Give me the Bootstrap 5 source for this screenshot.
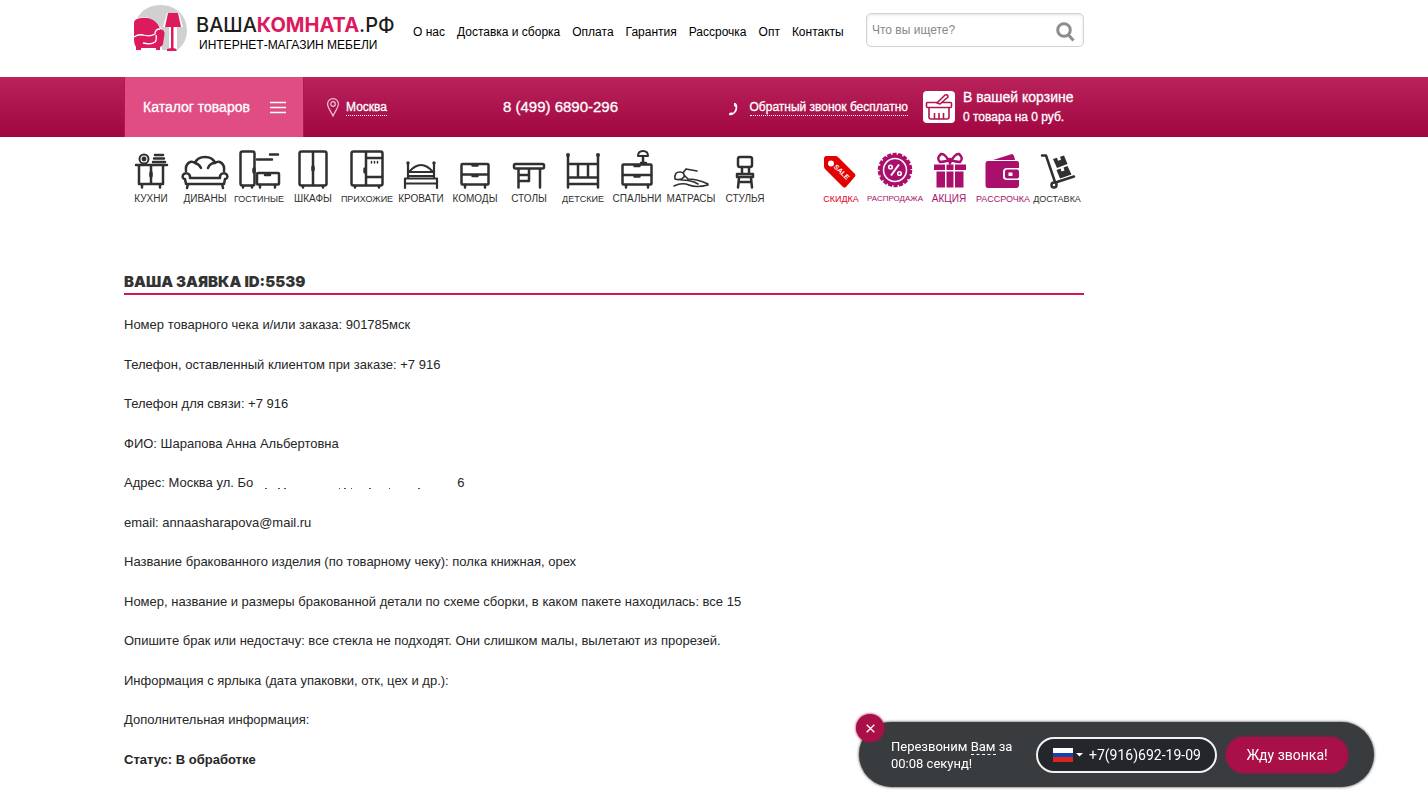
<!DOCTYPE html>
<html lang="ru">
<head>
<meta charset="utf-8">
<meta name="viewport" content="width=device-width, initial-scale=1">
<title>Ваша комната — заявка 5539</title>
<link href="https://cdn.jsdelivr.net/npm/bootstrap@5.3.0/dist/css/bootstrap.min.css" rel="stylesheet">
<script src="https://cdn.jsdelivr.net/npm/bootstrap@5.3.0/dist/js/bootstrap.bundle.min.js" defer></script>
<style>
body{font-family:"Liberation Sans",Arial,sans-serif;font-size:13px;color:#262626;background:#fff}
a{color:inherit;text-decoration:none}
.page-col{max-width:960px;margin-left:124px}
.site-head{height:77px}
.brand{width:280px;padding:5px 0 0 10px}
.brand-name{font:500 20px/24px Inter,sans-serif;color:#1d1d1b}
.brand-name b{font-weight:700;color:#dc1a5e}
.brand-sub{font-size:12px;line-height:16px;color:#000;padding-left:3px}
.top-nav{font-size:12px;line-height:18px;color:#000;gap:12px;padding:23px 0 0 9px}
.search-box{width:218px;height:34px;border:1px solid #d2d2d2;border-radius:5px;margin-top:13px;box-shadow:inset 0 1px 3px #e4e4e4}
.search-box input{border:0;background:none;font-size:12px;padding:0 5px;min-width:0;outline:0;color:#333}
.search-box input::placeholder{color:#888;opacity:1}
.search-box button,.call-box button{border:0;background:none;padding:0}
.red-bar{background:linear-gradient(#ba225b,#a00740);color:#fff}
.red-bar .page-col{height:60px}
.catalog-btn{width:180px;height:60px;border:solid #b01850;border-width:0 1px;background:#df4d83;color:#fff;font-size:14px;padding:0 17px 0 18px}
.bold-ish{-webkit-text-stroke:.3px #fff}
.city-link{margin-left:23px;gap:7px;font-size:12px}
.dotted{border-bottom:1px dotted #fff;line-height:15px;padding-top:1px}
.phone{font-size:15px;margin-left:116px}
.callback{font-size:12px;gap:10px;margin-left:auto;margin-right:15px}
.basket{gap:8px;width:161px}
.basket-title{font-size:14px;line-height:20px}
.basket-sum{font-size:12px;line-height:20px}
.cat-row{padding-top:13px}
.cat-row a{width:54px;display:flex;flex-direction:column;align-items:center;font-size:10px;line-height:14px;color:#303030;white-space:nowrap}
.cat-row a.long{font-size:9px}
.cat-row a.longest{font-size:8px}
.cat-row svg{display:block;width:54px;height:42px}
.ln{fill:none;stroke:#303030;stroke-width:2.5;stroke-linecap:round;stroke-linejoin:round}
.cat-row a.promo{color:#a9106b}
.cat-row a.sale{color:#e2001a}
.claim{padding-top:66px}
.claim h1{font:900 15px/20px Inter,sans-serif;color:#333;border-bottom:2px solid #d2175c;padding-bottom:1px;margin-bottom:20px}
.claim-list{gap:20px}
.erased{width:204px;height:10px;vertical-align:-5px}
.call-box{position:fixed;right:54px;bottom:6px;width:515px;height:65px;border-radius:33px;background:#393c3f;color:#fff;font:14px/17px Roboto,sans-serif;box-shadow:0 0 3px #333;padding:1px 26px 0 32px}
.call-msg{width:145px;font-size:13px}
.call-msg span{border-bottom:1px dashed #fff}
.call-phone{width:181px;height:36px;border:2px solid #f2f2f2;border-radius:18px;background:#23262b;padding:0 13px 0 15px}
.call-phone input{width:113px;border:0;background:none;color:#fff;padding:0;outline:0}
.call-box .call-go{width:122px;height:36px;border-radius:18px;background:#a81047;color:#fff;margin-left:9px;box-shadow:0 0 3px #a81047}
.call-box .call-close{position:absolute;left:-3px;top:-8px;width:28px;height:28px;border-radius:50%;background:#a81047;box-shadow:0 0 3px #a81047;display:grid;place-items:center}
</style>
</head>
<body>
<header>
<div class="page-col site-head d-flex align-items-start">
  <a href="#" class="brand d-flex flex-shrink-0">
    <svg width="54" height="48" viewBox="0 0 54 48" aria-hidden="true"><path fill="#d0d0d0" d="M3 14C7 5 16 0 27 0c15 0 26 11 26 25 0 9-4 16-10 20V22h6L45 8H33l-4 14h6v23h-7V24L20 17Q12 9 3 14z"/><path fill="#dc1a5e" d="M0 18q0-3 3-4 9-3 16 1 5 3 7 9 5 1 4.500 5L29 39q-1 3-3 3v3h-4v-2H7v2H2v-3q-2-3-2-7z"/><path fill="none" stroke="#fff" stroke-width="1.300" d="M0 32q4-3 9-2 7 2 12-1 0-5 5-5M9 38q8 2 12-1 2-2 1-7"/><path fill="#dc1a5e" d="M34 8h10l3 14H31zM37 22h2.500v21l3 1v2H33v-2l4-1z"/></svg>
    <span class="d-flex flex-column ps-2 pt-2"><span class="brand-name">ВАША<b>КОМНАТА</b>.РФ</span><span class="brand-sub">ИНТЕРНЕТ-МАГАЗИН МЕБЕЛИ</span></span>
  </a>
  <nav class="top-nav d-flex text-nowrap"><a href="#">О нас</a><a href="#">Доставка и сборка</a><a href="#">Оплата</a><a href="#">Гарантия</a><a href="#">Рассрочка</a><a href="#">Опт</a><a href="#">Контакты</a></nav>
  <form class="search-box d-flex align-items-center ms-auto flex-shrink-0"><input class="flex-grow-1" type="search" placeholder="Что вы ищете?" aria-label="Поиск"><button type="button" class="pe-2 pt-1" aria-label="Найти"><svg width="19" height="20" viewBox="0 0 19 20" fill="none" stroke="#8d8d8d" stroke-width="3"><circle cx="8" cy="8" r="6.300"/><path d="m12.500 13 5 5.500"/></svg></button></form>
</div>
<div class="red-bar">
  <div class="page-col d-flex align-items-center text-nowrap">
    <button class="catalog-btn bold-ish d-flex align-items-center justify-content-between">Каталог товаров<svg width="16" height="13" viewBox="0 0 16 13" stroke="#fff" stroke-width="1.500"><path d="M0 1.500h16M0 6.500h16M0 11.500h16"/></svg></button>
    <a href="#" class="city-link d-flex align-items-center"><svg width="12" height="19" viewBox="0 0 12 19" fill="none" stroke="#f4c4d6" stroke-width="1.200"><path d="M6 18C4 13 .6 10 .6 6a5.400 5.400 0 0 1 10.800 0C11.400 10 8 13 6 18z"/><circle cx="6" cy="6" r="2.300"/></svg><span class="dotted bold-ish">Москва</span></a>
    <span class="phone bold-ish">8 (499) 6890-296</span>
    <a href="#" class="callback d-flex align-items-center"><svg class="mt-1" width="11" height="13" viewBox="0 0 11 13"><path d="M5 0q2-.6 3 2 1 5-2 8-3 3-6 2l.3-2 3-.8.7 1Q7 7 6.500 4L5 3z" fill="#fff"/></svg><span class="dotted bold-ish">Обратный звонок бесплатно</span></a>
    <a href="#" class="basket d-flex align-items-center"><svg width="32" height="32" viewBox="0 0 32 32" fill="none" stroke="#b3164f" stroke-width="1.600" stroke-linejoin="round"><rect width="32" height="32" rx="4" fill="#fff" stroke="none"/><rect x="3.500" y="11.500" width="25" height="5" rx="1"/><path d="M6 17v9q0 2 2 2h16q2 0 2-2v-9M11.500 28v-6M16 28v-6M20.500 28v-6"/><path fill="#fff" d="m14 12 8-8q3-1 3 2l-8 7z"/></svg><span class="bold-ish d-flex flex-column"><span class="basket-title">В вашей корзине</span><span class="basket-sum">0 товара на 0 руб.</span></span></a>
  </div>
</div>
<nav class="page-col cat-row d-flex justify-content-between">
  <div class="d-flex">
    <a href="#"><svg class="ln"><path d="M12 15h31M15 16v18h24V16M27 16v18M18 35.500v2M36 35.500v2M31 5h8M30 8.500h10M29 12h12"/><circle cx="20" cy="9" r="4.500" stroke-width="2"/><circle cx="20" cy="9" r="1.200"/><path stroke-width="3.500" d="M27 23v3"/></svg>КУХНИ</a>
    <a href="#"><svg class="ln"><path d="M8 21C7 13 13 10 17 13 20 5 34 5 37 13c4-3 10 0 9 8M17 13q4 1 6 5M37 13q-5 0-7 5M12 26v2h30v-2M12 27c0-4-5-5-7-2-1 2 0 4 2 4l1 5h38l1-5c2 0 3-2 2-4-2-3-7-2-7 2M10 34l-1 4M44 34l1 4"/></svg>ДИВАНЫ</a>
    <a href="#" class="long"><svg class="ln"><rect x="8.500" y="1.500" width="14" height="34" rx="2"/><path d="M25 9.500h15M38 4.500h8M11 36v1.500M20 36v1.500M28 35v2.500M43 35v2.500M33 25h5"/><rect x="25" y="23" width="22" height="11.500" rx="1"/><path stroke-width="3.500" d="M22 19v3"/></svg>ГОСТИНЫЕ</a>
    <a href="#"><svg class="ln"><rect x="13.500" y="1.500" width="27" height="34" rx="2"/><path d="M27 2v33M17 36v1.500M37 36v1.500"/><path stroke-width="3.500" d="M27 17v3"/></svg>ШКАФЫ</a>
    <a href="#" class="long"><svg class="ln"><rect x="11.500" y="1.500" width="31" height="34" rx="2"/><path d="M26 2v33M26 8h16M26 27h16M15 36v1.500M39 36v1.500"/><path stroke-width="1.500" d="M31.500 11.500v1.500M34.500 11.500v1.500M37.500 11.500v1.500"/><path stroke-width="3.500" d="M25 19v3"/></svg>ПРИХОЖИЕ</a>
    <a href="#"><svg class="ln" style="stroke-width:2.200"><path d="M14 14v13M40 14v13M15 22q12-14 24 0M14 22h26M14 26h26M11 28.500h32v5H11zM11 33v5M43 33v5"/><path stroke-width="3.500" d="M14 13v.1M40 13v.1"/></svg>КРОВАТИ</a>
    <a href="#"><svg class="ln"><rect x="13.500" y="14" width="27" height="20.500" rx="1"/><path d="M14 24.500h26M17 35v2.500M37 35v2.500"/><path d="M24.500 15.500h5M24.500 26h5"/></svg>КОМОДЫ</a>
    <a href="#"><svg class="ln"><rect x="12" y="14" width="30" height="4.500" rx="1.500"/><path d="M16.500 19v18.500M38 19v18.500M16.500 25H27M27 19v12H16.500"/></svg>СТОЛЫ</a>
    <a href="#" class="long"><svg class="ln"><path d="M12 6v31.500M42 6v31.500M12 14h30M22 14v13M32 14v13M12 27.500h30M12 34h30"/><path stroke-width="4" d="M12 5v.1M42 5v.1"/></svg>ДЕТСКИЕ</a>
    <a href="#"><svg class="ln"><rect x="12.500" y="14.500" width="29" height="20" rx="1"/><path d="M13 25h28M16 35v2.500M38 35v2.500M33 6v8M31 13h5"/><path stroke-width="2" d="M28 6q0-5 5-5t5 5z"/><path d="M24.500 16h5M24.500 26.500h5"/></svg>СПАЛЬНИ</a>
    <a href="#"><svg class="ln" style="stroke-width:1.600"><path d="M11 29q-1-7 5-7 5 0 4 5-3 4-9 2M17 30q11 0 17 4M20 25l4 4q9 0 20 5M19 23l3-4 11 2M10 36q8-4 15-1t19 0"/></svg>МАТРАСЫ</a>
    <a href="#"><svg class="ln"><rect x="20" y="7" width="14" height="10" rx="2"/><path d="M24 17v6M31 17v6M19 24h16v3H19zM21 28l-1 9.500M33 28l1 9.500M21 32h12"/></svg>СТУЛЬЯ</a>
  </div>
  <div class="d-flex">
    <a href="#" class="sale long"><svg><path fill="#e20000" d="M11.500 6H21q2 0 3 1l17 17q1 1 0 2.500L32 37q-1.500 1-3 0L11 19q-1-1-1-3V7.500z"/><circle cx="17" cy="13.500" r="3" fill="#fff"/><text x="27.500" y="24" transform="rotate(45 27 22)" text-anchor="middle" font-family="Liberation Sans" font-weight="700" font-size="7" fill="#fff">SALE</text></svg>СКИДКА</a>
    <a href="#" class="promo longest"><svg><circle cx="27" cy="20" r="15.500" fill="#a9106b"/><circle cx="27" cy="20" r="15.500" fill="none" stroke="#a9106b" stroke-width="3.500" stroke-dasharray="4 1.400"/><circle cx="27" cy="20" r="11.500" fill="none" stroke="#fff" stroke-width="1.500"/><path d="m31 14.500-8 11" stroke="#fff" stroke-width="2"/><circle cx="22.500" cy="17" r="1.800" fill="none" stroke="#fff" stroke-width="1.600"/><circle cx="31.500" cy="23.500" r="1.800" fill="none" stroke="#fff" stroke-width="1.600"/></svg>РАСПРОДАЖА</a>
    <a href="#" class="promo"><svg><path fill="#a9106b" d="M12 14.500h11V20H12zM24.500 14.500h7V20h-7zM33 14.500h11V20H33zM14.500 21.500H23v16h-8.500zM24.500 21.500h7v16h-7zM33 21.500h8.500v16H33z"/><path fill="none" stroke="#a9106b" stroke-width="2.500" d="M28 13q-5-10-9-9-5 4-1 8 6 0 10-3 4 3 10 3 4-4-1-8-4-1-9 9z"/></svg>АКЦИЯ</a>
    <a href="#" class="promo long"><svg><path fill="#a9106b" d="M17 10 36 4q2 0 3 6zM12 11h29q2 0 2 2v5H31q-4 0-4 4v5q0 3 4 3h12v5q0 3-3 3H12q-2.500 0-2.500-3V14q0-3 2.500-3z"/><rect x="29" y="19.500" width="14" height="9" rx="2" fill="#a9106b"/><rect x="32.500" y="22.500" width="4" height="3.500" fill="#fff"/></svg>РАССРОЧКА</a>
    <a href="#" class="long"><svg><path class="ln" d="M12 5.500h4L25 32M27 32l17-5.500"/><circle cx="24" cy="35" r="2.500" fill="#fff" stroke="#303030" stroke-width="2.500"/><path fill="#303030" d="m23 9 4-1.300 1 3 3-1-1-3L34 5.500l3.500 8.500-10.500 4zM26.500 20l4-1.500 1 3 3-1-1-3 4-1.500 4 8.500L30 28.500z"/></svg>ДОСТАВКА</a>
  </div>
</nav>
</header>
<main class="page-col claim">
  <h1>ВАША ЗАЯВКА ID:5539</h1>
  <div class="claim-list d-flex flex-column">
    <div>Номер товарного чека и/или заказа: 901785мск</div>
    <div>Телефон, оставленный клиентом при заказе: +7 916</div>
    <div>Телефон для связи: +7 916</div>
    <div>ФИО: Шарапова Анна Альбертовна</div>
    <div>Адрес: Москва ул. Бо<svg class="erased" viewBox="0 0 204 10" fill="#555" aria-hidden="true"><path d="M12 6h2v1h-2zM25 6h2v1h-2zM31 6h2v1h-2zM86 6h1v1h-1zM91 6h2v1h-2zM98 6h1v1h-1zM116 6h2v1h-2zM136 6h1v1h-1zM165 6h2v1h-2z"/></svg>6</div>
    <div>email: annaasharapova@mail.ru</div>
    <div>Название бракованного изделия (по товарному чеку): полка книжная, орех</div>
    <div>Номер, название и размеры бракованной детали по схеме сборки, в каком пакете находилась: все 15</div>
    <div>Опишите брак или недостачу: все стекла не подходят. Они слишком малы, вылетают из прорезей.</div>
    <div>Информация с ярлыка (дата упаковки, отк, цех и др.):</div>
    <div>Дополнительная информация:</div>
    <div class="fw-bold">Статус: В обработке</div>
  </div>
</main>
<aside class="call-box d-flex align-items-center">
  <button class="call-close" aria-label="Закрыть"><svg width="9" height="9" viewBox="0 0 9 9" stroke="#fff" stroke-width="1.300"><path d="m.7.7 7.600 7.600M8.300.7.700 8.300"/></svg></button>
  <div class="call-msg">Перезвоним <span>Вам</span> за<br>00:08 секунд!</div>
  <div class="call-phone d-flex align-items-center justify-content-between">
    <svg width="30" height="14" viewBox="0 0 30 14" aria-hidden="true"><path fill="#fff" d="M0 0h20v5H0z"/><path fill="#1440b4" d="M0 5h20v4H0z"/><path fill="#d8261c" d="M0 9h20v5H0z"/><path fill="#fff" d="M23 5h7l-3.500 3.500z"/></svg>
    <input type="tel" value="+7(916)692-19-09" aria-label="Телефон">
  </div>
  <button class="call-go">Жду звонка!</button>
</aside>
</body>
</html>
